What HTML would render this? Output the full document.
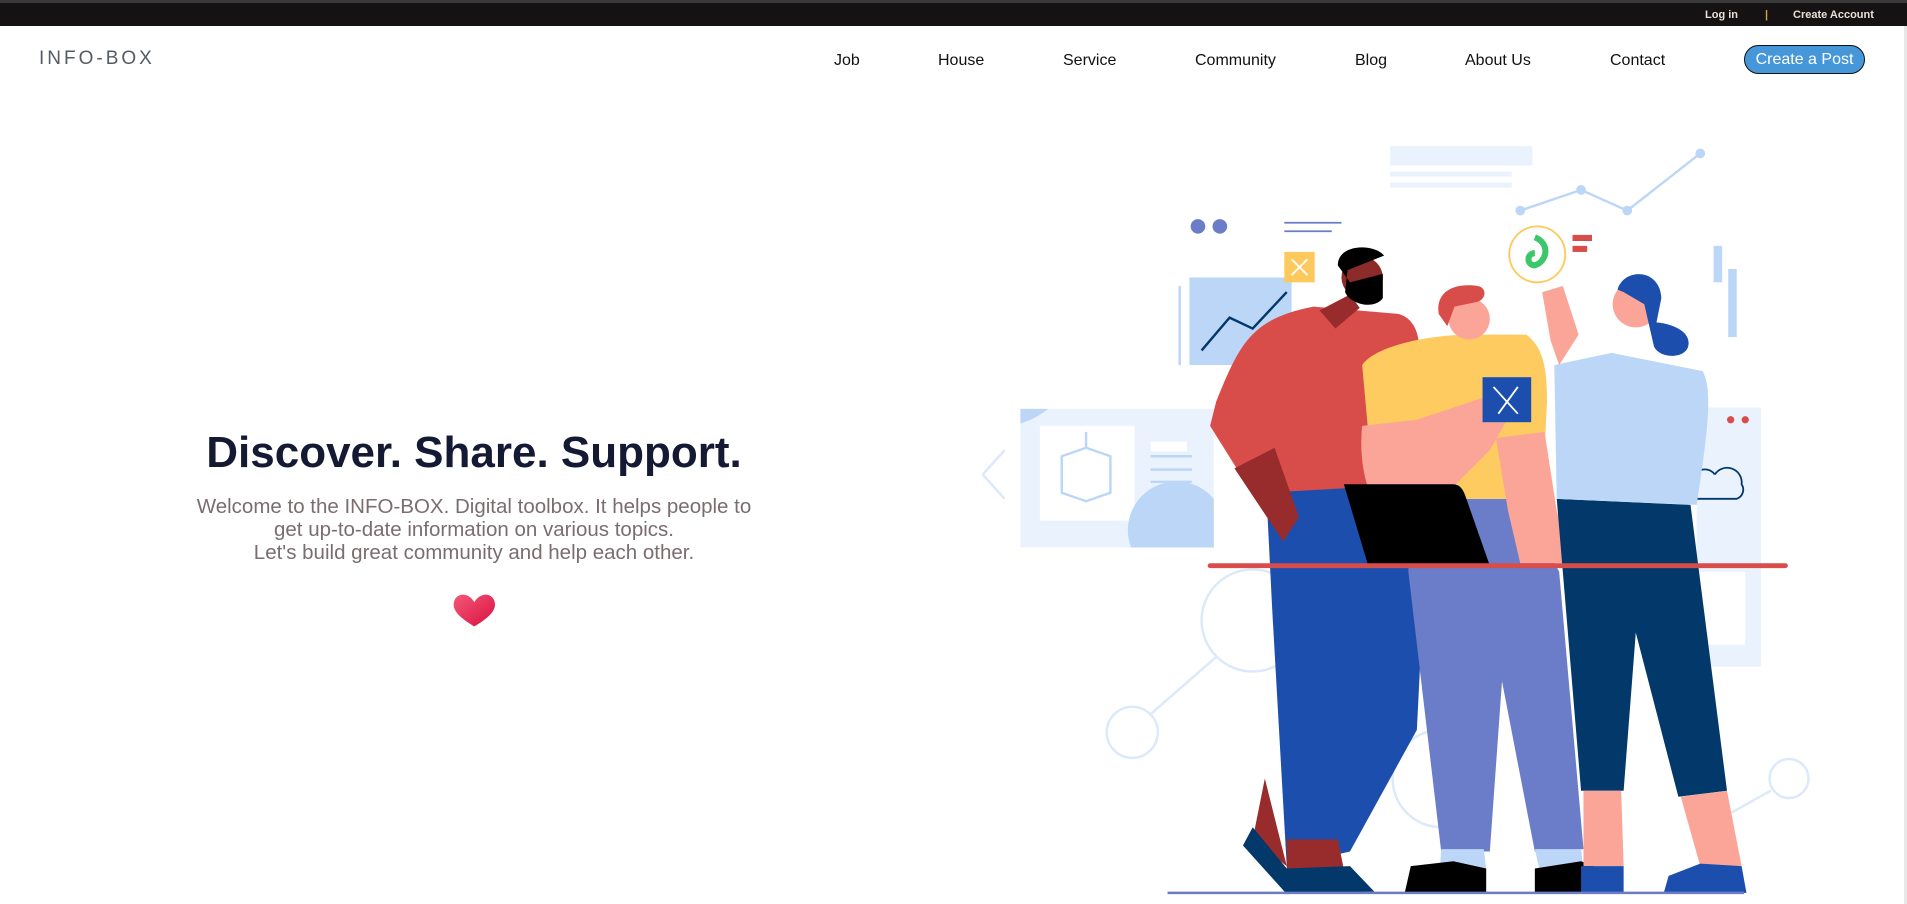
<!DOCTYPE html>
<html><head><meta charset="utf-8"><style>
*{margin:0;padding:0;box-sizing:border-box}
html,body{width:1907px;height:904px;overflow:hidden;background:#fff;font-family:"Liberation Sans",sans-serif;position:relative}
.top{position:absolute;left:0;top:0;width:1907px;height:26px;background:#141212;border-top:3px solid #3a3a3a}
.top span{position:absolute;top:6px;font-size:11px;font-weight:bold;color:#e8e0d8}
.logo{position:absolute;left:39px;top:48px;font-size:19px;letter-spacing:3px;color:#555b66}
.nav a{position:absolute;top:52px;font-size:16px;color:#111;text-decoration:none}
.btn{position:absolute;left:1744px;top:45px;width:121px;height:29px;border:1px solid #111;border-radius:15px;background:#4597d9;color:#fff;font-size:16px;text-align:center;line-height:27px}
h1{position:absolute;left:0;width:948px;top:428px;text-align:center;font-size:44px;color:#141a33;font-weight:bold}
.p{position:absolute;left:0;width:948px;top:495px;text-align:center;font-size:20.5px;line-height:23px;color:#7b6d6f}
svg.ill{position:absolute;left:0;top:0}
.sb{position:absolute;left:1904px;top:26px;width:3px;height:878px;background:#e8e8e8}
</style></head><body>
<div class="top"><span style="left:1705px">Log in</span><span style="left:1765px;color:#d8a040">|</span><span style="left:1793px">Create Account</span></div>
<div class="logo">INFO-BOX</div>
<div class="nav">
<a style="left:834px">Job</a><a style="left:938px">House</a><a style="left:1063px">Service</a><a style="left:1195px">Community</a><a style="left:1355px">Blog</a><a style="left:1465px">About Us</a><a style="left:1610px">Contact</a>
</div>
<div class="btn">Create a Post</div>
<h1>Discover. Share. Support.</h1>
<div class="p">Welcome to the INFO-BOX. Digital toolbox. It helps people to<br>get up-to-date information on various topics.<br>Let's build great community and help each other.</div>
<svg class="ill" width="1907" height="904" viewBox="0 0 1568 743">
<defs><linearGradient id="hg" x1="0" y1="0" x2="1" y2="1"><stop offset="0" stop-color="#f5587a"/><stop offset="1" stop-color="#d8103e"/></linearGradient></defs>
<path d="M390 495 C384 485 373 488 373 497 C373 504 382 510 390 515 C398 510 407 504 407 497 C407 488 396 485 390 495Z" fill="url(#hg)"/>
<g fill="none" stroke="#dce8fb" stroke-width="2">
<circle cx="1030" cy="510" r="42"/><circle cx="931" cy="602" r="21"/><line x1="945" y1="588" x2="1000" y2="540"/>
<circle cx="1185" cy="640" r="40"/><circle cx="1471" cy="640" r="16"/><line x1="1456" y1="650" x2="1420" y2="670"/>
<path d="M808 390 L826 370 M808 390 L826 410"/>
</g>
<rect x="839" y="336" width="159" height="114" fill="#eaf2fe"/>
<rect x="855" y="350" width="78" height="78" fill="#fff"/>
<path d="M930 450 A40 40 0 0 1 998 410 L998 450Z" fill="#bcd6f8"/>
<path d="M839 336 L862 336 Q850 345 839 348Z" fill="#bcd6f8"/>
<g stroke="#bcd6f8" stroke-width="2" fill="none"><path d="M873 375 L893 368 L913 375 L913 405 L893 412 L873 405Z M893 368 V355"/><line x1="946" y1="375" x2="980" y2="375"/><line x1="946" y1="386" x2="980" y2="386"/><line x1="946" y1="396" x2="980" y2="396"/></g>
<rect x="946" y="363" width="30" height="8" fill="#fff"/>
<rect x="1395" y="335" width="53" height="213" fill="#eaf2fe"/>
<rect x="1380" y="470" width="55" height="60" fill="#fff"/>
<circle cx="1423" cy="345" r="3" fill="#d84c4a"/><circle cx="1435" cy="345" r="3" fill="#d84c4a"/>
<rect x="978" y="228" width="84" height="72" fill="#bcd6f8"/>
<line x1="970" y1="235" x2="970" y2="300" stroke="#bcd6f8" stroke-width="2"/>
<path d="M988 288 L1011 261 L1030 270 L1058 240" stroke="#03386a" stroke-width="2" fill="none"/>
<rect x="1143" y="120" width="117" height="16" fill="#eaf2fe"/>
<rect x="1143" y="141" width="100" height="4" fill="#eaf2fe"/><rect x="1143" y="150" width="100" height="4" fill="#eaf2fe"/>
<path d="M1250 173 L1300 156 L1338 173 L1398 126" stroke="#bcd6f8" stroke-width="2" fill="none"/>
<g fill="#bcd6f8"><circle cx="1250" cy="173" r="4"/><circle cx="1300" cy="156" r="4"/><circle cx="1338" cy="173" r="4"/><circle cx="1398" cy="126" r="4"/></g>
<rect x="1409" y="202" width="7" height="30" fill="#bcd6f8"/><rect x="1421" y="221" width="7" height="56" fill="#bcd6f8"/>
<circle cx="985" cy="186" r="6" fill="#6b7cc8"/><circle cx="1003" cy="186" r="6" fill="#6b7cc8"/>
<line x1="1056" y1="183" x2="1103" y2="183" stroke="#6b7cc8" stroke-width="1.5"/><line x1="1056" y1="190" x2="1095" y2="190" stroke="#6b7cc8" stroke-width="1.5"/>
<rect x="1056" y="207" width="25" height="25" fill="#fdc95c"/><path d="M1062 213 L1075 226 M1075 213 L1062 226" stroke="#fff" stroke-width="1.5"/>
<circle cx="1264" cy="209" r="23" fill="#fff" stroke="#fdc95c" stroke-width="1.5"/>
<path d="M1262 195 C1275 200 1272 215 1262 218 C1255 218 1255 208 1262 208" stroke="#3cc86a" stroke-width="5" fill="none"/>
<rect x="1293" y="193" width="16" height="5" fill="#d84c4a"/><rect x="1293" y="202" width="12" height="5" fill="#d84c4a"/>
<path d="M1410 390 a12 12 0 0 1 22 8 a8 8 0 0 1 -4 12 h-38 a8 8 0 0 1 2 -16 a10 10 0 0 1 18 -4" stroke="#03386a" stroke-width="1.5" fill="none"/>
<path d="M1040 380 L1132 382 L1170 500 L1165 600 L1110 700 L1058 712 L1046 500Z" fill="#1c4fad"/>
<path d="M1040 640 L1058 712 L1030 690Z" fill="#982b2b"/>
<path d="M1058 690 L1100 690 L1105 715 L1058 716Z" fill="#982b2b"/>
<path d="M1030 680 L1058 714 L1110 712 L1130 733 L1058 735 L1022 695Z" fill="#03386a"/>
<path d="M1000 330 C1020 280 1030 262 1080 252 L1150 258 C1165 262 1168 280 1166 290 L1130 400 L1040 405 L1020 390 L995 350Z" fill="#d84c4a"/>
<path d="M1015 385 L1048 368 L1068 425 L1055 445Z" fill="#982b2b"/>
<path d="M1085 255 L1098 270 L1118 253 L1110 242Z" fill="#982b2b"/>
<circle cx="1120" cy="228" r="17" fill="#8b2b2a"/>
<path d="M1100 218 C1100 200 1130 200 1138 210 L1108 222 L1106 240 C1110 250 1130 255 1137 245 L1137 225 L1110 232Z" fill="#000"/>
<path d="M1160 410 L1250 410 L1282 470 L1302 698 L1262 700 L1235 560 L1225 700 L1185 700 L1158 470Z" fill="#6b7cc8"/>
<path d="M1185 698 L1220 698 L1222 714 L1184 714Z" fill="#bcd6f8"/><path d="M1262 698 L1300 698 L1302 716 L1266 716Z" fill="#bcd6f8"/>
<path d="M1160 712 L1195 708 L1222 714 L1222 734 L1155 734Z M1262 714 L1300 708 L1330 720 L1330 734 L1262 734Z" fill="#000"/>
<path d="M1120 300 C1130 285 1170 276 1205 275 L1255 275 C1268 285 1272 300 1272 330 L1268 410 L1130 410Z" fill="#fdcb5f"/>
<path d="M1120 350 L1165 345 L1225 325 L1245 335 L1225 370 L1185 410 L1128 410 C1120 390 1118 370 1120 350Z" fill="#fba598"/>
<path d="M1230 360 L1270 355 L1280 420 L1290 455 L1298 463 L1250 463 L1240 420Z" fill="#fba598"/>
<rect x="1219" y="310" width="40" height="37" fill="#1c4fad"/><path d="M1228 318 L1248 340 M1248 318 L1232 340" stroke="#fff" stroke-width="1.5"/>
<circle cx="1208" cy="262" r="17" fill="#fba598"/>
<path d="M1183 258 C1180 240 1195 232 1215 235 C1222 236 1223 245 1215 248 L1196 252 L1190 268Z" fill="#d84c4a"/>
<path d="M1280 410 L1390 415 L1420 650 L1380 655 L1345 520 L1335 650 L1300 650Z" fill="#03386a"/>
<path d="M1302 650 L1333 650 L1335 712 L1302 712Z M1382 655 L1420 650 L1432 712 L1398 712Z" fill="#fba598"/>
<path d="M1300 712 L1335 712 L1335 734 L1300 734Z M1372 720 L1398 710 L1432 712 L1436 734 L1368 734Z" fill="#1c4fad"/>
<path d="M1278 300 L1325 290 L1400 305 C1408 320 1405 350 1395 415 L1280 410Z" fill="#bcd6f8"/>
<path d="M1268 240 L1285 235 L1298 275 L1282 300 L1275 280Z" fill="#fba598"/>
<circle cx="1345" cy="250" r="19" fill="#fba598"/>
<path d="M1330 238 C1335 220 1365 220 1366 245 L1362 265 C1368 265 1392 270 1388 285 C1385 295 1365 295 1360 285 L1352 250 L1335 240Z" fill="#1c4fad"/>
<path d="M1105 398 L1195 398 C1200 398 1203 402 1205 408 L1225 465 L1125 465Z" fill="#000"/>
<line x1="995" y1="465" x2="1468" y2="465" stroke="#d84c4a" stroke-width="4" stroke-linecap="round"/>
<line x1="960" y1="734" x2="1434" y2="734" stroke="#6b7cc8" stroke-width="2"/>
</svg>
<div class="sb"></div>
</body></html>
